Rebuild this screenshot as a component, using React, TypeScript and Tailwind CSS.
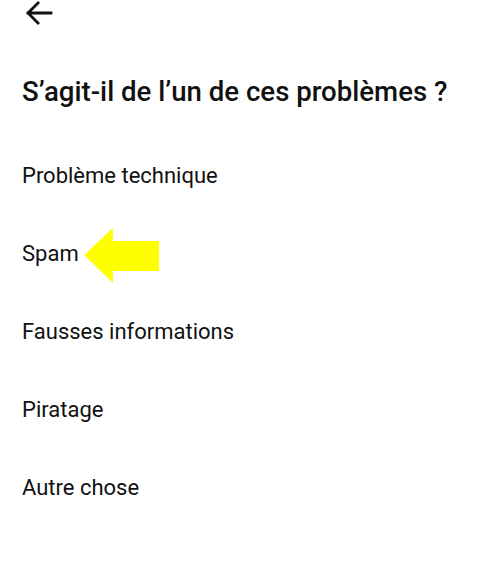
export default function App() {
  const items = [
    "Problème technique",
    "Spam",
    "Fausses informations",
    "Piratage",
    "Autre chose",
  ];

  return (
    <div
      className="h-[572px] w-[500px] overflow-hidden bg-white text-[#111]"
      style={{ fontFamily: "Roboto, 'Noto Sans', sans-serif" }}
    >
      <div className="flex h-[26px] items-center pl-[25px]">
        <svg width="28" height="24" viewBox="0 0 28 24" fill="none">
          <path
            d="M26 12H3M13 2L3 12l10 10"
            stroke="#111"
            strokeWidth="2.8"
            strokeLinecap="square"
          />
        </svg>
      </div>

      <h1 className="mt-[50px] pl-[22px] text-[27.6px] font-medium leading-[32px]">
        S’agit-il de l’un de ces problèmes ?
      </h1>

      <ul className="mt-[28px] flex flex-col">
        {items.map((item) => (
          <li
            key={item}
            className="relative flex h-[78px] items-center pl-[22px] text-[22px]"
          >
            <span>{item}</span>
            {item === "Spam" && (
              <svg
                className="absolute left-[84px] top-[14px]"
                width="78"
                height="56"
                viewBox="0 0 78 56"
              >
                <path d="M0 27L29 0V13H75V43H29V55Z" fill="#ffff00" />
              </svg>
            )}
          </li>
        ))}
      </ul>
    </div>
  );
}
